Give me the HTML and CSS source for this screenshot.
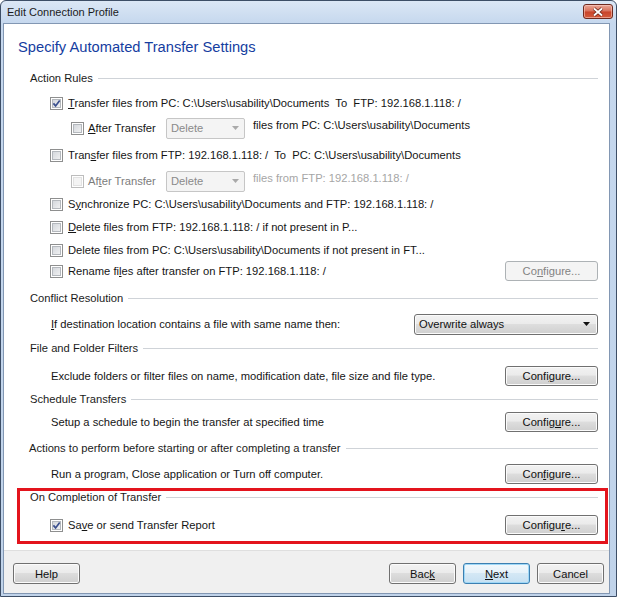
FILE: index.html
```html
<!DOCTYPE html>
<html>
<head>
<meta charset="utf-8">
<link rel="stylesheet" href="styles.css">
</head>
<body>
<div class="window">
  <div class="titlebar">
    <span class="title">Edit Connection Profile</span>
    <span class="close"><svg viewBox="0 0 12 10" width="12" height="10"><path d="M2 1.5 10 8.5M10 1.5 2 8.5" class="xo"/><path d="M2 1.5 10 8.5M10 1.5 2 8.5" class="xi"/></svg></span>
  </div>
  <div class="client">
    <div class="main">
      <div class="heading">Specify Automated Transfer Settings</div>
      <div class="groups">
        <div class="sec mt11"><span>Action Rules</span></div>
        <div class="row mt5"><span class="cb on"><svg viewBox="0 0 9 9"><path d="M1.4 4.4 3.6 6.9 7.7 1.6"/></svg></span><span><u>T</u>ransfer files from PC: C:\Users\usability\Documents&nbsp; To&nbsp; FTP: 192.168.1.118: /</span></div>
        <div class="row sub mt5"><span class="cb"></span><span class="after"><u>A</u>fter Transfer</span><span class="dsel"><span>Delete</span><svg viewBox="0 0 7 4" width="7" height="4"><path d="M0 0h7L3.5 4z"/></svg></span><span class="files">files from PC: C:\Users\usability\Documents</span></div>
        <div class="row mt7"><span class="cb"></span><span>Tran<u>s</u>fer files from FTP: 192.168.1.118: /&nbsp; To&nbsp; PC: C:\Users\usability\Documents</span></div>
        <div class="row sub mt6"><span class="cb dis"></span><span class="after gray">Af<u>t</u>er Transfer</span><span class="dsel"><span>Delete</span><svg viewBox="0 0 7 4" width="7" height="4"><path d="M0 0h7L3.5 4z"/></svg></span><span class="files light">files from FTP: 192.168.1.118: /</span></div>
        <div class="row mt3"><span class="cb"></span><span>S<u>y</u>nchronize PC: C:\Users\usability\Documents and FTP: 192.168.1.118: /</span></div>
        <div class="row mt3"><span class="cb"></span><span><u>D</u>elete files from FTP: 192.168.1.118: / if not present in P...</span></div>
        <div class="row mt3"><span class="cb"></span><span>Delete files from PC: C:\Users\usability\Documents if not present in FT...</span></div>
        <div class="row mt1"><span class="cb"></span><span>Rename fi<u>l</u>es after transfer on FTP: 192.168.1.118: /</span><span class="btn dis">Co<u>n</u>figure...</span></div>

        <div class="sec mt7"><span>Conflict Resolution</span></div>
        <div class="row desc mt6"><span><u>I</u>f destination location contains a file with same name then:</span><span class="combo"><span>Overwrite always</span><svg viewBox="0 0 7 4" width="7" height="4"><path d="M0 0h7L3.5 4z"/></svg></span></div>

        <div class="sec mt4"><span>File and Folder Filters</span></div>
        <div class="row desc mt8"><span>Exclude folders or filter files on name, modification date, file size and file type.</span><span class="btn">Confi<u>g</u>ure...</span></div>

        <div class="sec mt3"><span>Schedule Transfers</span></div>
        <div class="row desc mt3"><span>Setup a schedule to begin the transfer at specified time</span><span class="btn">Config<u>u</u>re...</span></div>

        <div class="sec mt6 nudge"><span>Actions to perform before starting or after completing a transfer</span></div>
        <div class="row desc mt6"><span>Run a program, Close application or Turn off computer.</span><span class="btn">Con<u>f</u>igure...</span></div>

        <div class="sec mt3"><span>On Completion of Transfer</span></div>
        <div class="row mt8"><span class="cb on"><svg viewBox="0 0 9 9"><path d="M1.4 4.4 3.6 6.9 7.7 1.6"/></svg></span><span>Sa<u>v</u>e or send Transfer Report</span><span class="btn">Configu<u>r</u>e...</span></div>
      </div>
      <div class="redbox"></div>
    </div>
    <div class="footer">
      <span class="btn fbtn help">Help</span>
      <span class="btn fbtn">Bac<u>k</u></span>
      <span class="btn fbtn default"><u>N</u>ext</span>
      <span class="btn fbtn">Cancel</span>
    </div>
  </div>
</div>
</body>
</html>
```
FILE: styles.css
```css
body {
  margin: 0;
  font-family: "Liberation Sans", Arial, sans-serif;
  font-size: 11.2px;
  color: #151515;
  background: #ffffff;
}
u { text-decoration-thickness: 1px; text-underline-offset: 1px; }

.window {
  box-sizing: border-box;
  width: 617px;
  height: 597px;
  border: 1px solid #3d4e66;
  border-radius: 6px 6px 0 0;
  background: linear-gradient(#dbe7f5, #c6d8ee 22px, #c0d3ea);
  display: flex;
  flex-direction: column;
}
.titlebar {
  flex: none;
  height: 22px;
  display: flex;
  align-items: center;
  justify-content: space-between;
  padding: 0 3px 0 6px;
}
.title { font-size: 11px; color: #1b1b1b; }
.close {
  align-self: flex-start;
  margin-top: 3px;
  box-sizing: border-box;
  width: 30px;
  height: 15px;
  border: 1px solid #6e2a1f;
  border-radius: 3px;
  background: linear-gradient(#eaa797, #d8705a 48%, #c8432a 52%, #d45b3c);
  box-shadow: inset 0 0 0 1px rgba(255, 210, 200, 0.55);
  display: flex;
  align-items: center;
  justify-content: center;
}
.close .xo { stroke: #6b2619; stroke-width: 3.4; fill: none; }
.close .xi { stroke: #ffffff; stroke-width: 1.8; fill: none; }

.client {
  flex: 1;
  margin: 0 6px 2px 2px;
  border: 1px solid #8297b3;
  background: #ffffff;
  display: flex;
  flex-direction: column;
}
.main {
  flex: 1;
  position: relative;
  padding: 13px 11px 0 14px;
}
.heading {
  height: 20px;
  line-height: 20px;
  font-size: 14.7px;
  color: #153d9f;
}
.groups { padding-left: 12px; }

.sec {
  display: flex;
  align-items: center;
  height: 20px;
  gap: 5px;
  color: #1b1b1b;
}
.sec::after {
  content: "";
  flex: 1;
  height: 1px;
  background: #cfd3d8;
  box-shadow: 0 1px 0 #ffffff;
}
.sec.nudge { margin-left: -1px; }

.row {
  display: flex;
  align-items: center;
  height: 20px;
  padding-left: 20px;
  white-space: nowrap;
}
.row.sub { padding-left: 41px; }
.row.desc { padding-left: 21px; }
.row .cb { margin-right: 5px; }
.row.sub .cb { margin-right: 4px; }

.mt1 { margin-top: 1px; }
.mt3 { margin-top: 3px; }
.mt4 { margin-top: 4px; }
.mt5 { margin-top: 5px; }
.mt6 { margin-top: 6px; }
.mt7 { margin-top: 7px; }
.mt8 { margin-top: 8px; }
.mt11 { margin-top: 11px; }

.cb {
  flex: none;
  box-sizing: border-box;
  width: 13px;
  height: 13px;
  border: 1px solid #8e8f8f;
  background: linear-gradient(135deg, #cdd1d7, #f7f7f7);
  box-shadow: inset 0 0 0 1px #ffffff, inset 0 0 0 2px #b4b8bd;
  display: flex;
  align-items: center;
  justify-content: center;
}
.cb svg { width: 9px; height: 9px; }
.cb path { fill: none; stroke: #3a4f8e; stroke-width: 1.7; }
.cb.dis {
  border-color: #bdbdbd;
  background: #f4f4f4;
  box-shadow: inset 0 0 0 1px #ffffff, inset 0 0 0 2px #e2e2e2;
}

.after { width: 78px; }
.gray { color: #7c7c7c; }
.light { color: #a6a6a6; }

.dsel {
  flex: none;
  box-sizing: border-box;
  width: 79px;
  height: 21px;
  margin-right: 8px;
  border: 1px solid #c6c6c6;
  border-radius: 2px;
  background: #f4f4f4;
  color: #8a8a8a;
  display: flex;
  align-items: center;
  justify-content: space-between;
  padding: 0 5px 0 4px;
}
.dsel path { fill: #a9a9a9; }
.files { margin-top: -6px; }

.combo {
  flex: none;
  margin-left: auto;
  box-sizing: border-box;
  width: 184px;
  height: 21px;
  border: 1px solid #707070;
  border-radius: 3px;
  background: linear-gradient(#f2f2f2, #ebebeb 45%, #dddddd 50%, #cfcfcf);
  box-shadow: inset 0 0 0 1px #fbfbfb;
  display: flex;
  align-items: center;
  justify-content: space-between;
  padding: 0 7px 0 4px;
  color: #111;
}
.combo path { fill: #111; }

.btn {
  flex: none;
  margin-left: auto;
  box-sizing: border-box;
  width: 93px;
  height: 20px;
  border: 1px solid #707070;
  border-radius: 3px;
  background: linear-gradient(#f2f2f2, #ebebeb 45%, #dddddd 50%, #cfcfcf);
  box-shadow: inset 0 0 0 1px #fbfbfb;
  display: flex;
  align-items: center;
  justify-content: center;
  color: #111;
}
.btn.dis {
  border-color: #adb2b5;
  background: #f4f4f4;
  box-shadow: none;
  color: #838383;
}

.redbox {
  position: absolute;
  left: 13px;
  top: 464px;
  width: 591px;
  height: 56px;
  box-sizing: border-box;
  border: 3px solid #e3141d;
  pointer-events: none;
}

.footer {
  flex: none;
  box-sizing: border-box;
  height: 43px;
  border-top: 1px solid #dfdfdf;
  background: #f0f0f0;
  display: flex;
  align-items: flex-start;
  gap: 7px;
  padding: 12px 5px 0 9px;
}
.fbtn { width: 67px; height: 21px; margin-left: 0; }
.help { margin-right: auto; }
.default {
  border-color: #3c7fb1;
  box-shadow: inset 0 0 0 1px #9fd8f7;
  background: linear-gradient(#f2f8fc, #e6f2fa 45%, #d4e8f5 50%, #c6e0f2);
}
```
